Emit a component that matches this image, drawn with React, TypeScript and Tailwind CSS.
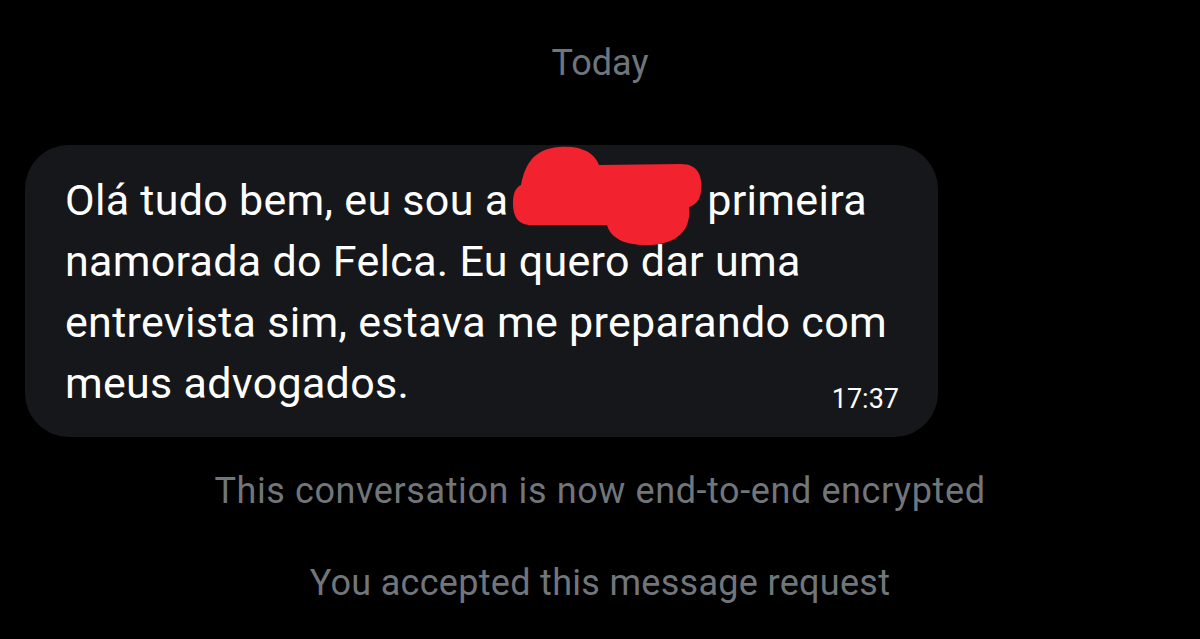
export default function App() {
  return (
    <div
      className="flex h-[639px] w-[1200px] flex-col overflow-hidden bg-black"
      style={{ fontFamily: "Roboto, 'Liberation Sans', sans-serif" }}
    >
      <div className="mt-[43px] text-center text-[36px] leading-[40px] text-[#6e767d]">Today</div>

      <div className="ml-[25px] mt-[62px] w-[913px] rounded-[44px] bg-[#16171a] pb-[23px] pl-[40px] pr-[39px] pt-[25px] text-[43px] leading-[61px] tracking-[0.3px] text-white">
        <div className="whitespace-nowrap">
          Olá tudo bem, eu sou a{" "}
          <span className="relative inline-block h-[10px] w-[177px]">
            <svg
              className="absolute left-[-8px] top-[-60px]"
              width="194"
              height="102"
              viewBox="0 0 194 102"
            >
              <path
                d="M10 40 C14 20 22 4 48 2 C70 0 84 8 88 20 L170 19 C186 19 192 30 190 46 C189 56 184 60 178 62 C180 80 172 98 140 100 C115 101 100 94 96 80 L20 80 C6 80 2 70 2 58 C2 46 6 42 10 40 Z"
                fill="#f2222f"
              />
            </svg>
          </span>{" "}
          primeira
        </div>
        <div className="whitespace-nowrap">namorada do Felca. Eu quero dar uma</div>
        <div className="whitespace-nowrap">entrevista sim, estava me preparando com</div>
        <div className="flex items-end justify-between">
          <span className="whitespace-nowrap">meus advogados.</span>
          <span className="text-[27px] leading-[30px] tracking-normal">17:37</span>
        </div>
      </div>

      <div className="mt-[32px] text-center text-[36px] leading-[44px] tracking-[0.6px] text-[#71767b]">
        This conversation is now end-to-end encrypted
      </div>
      <div className="mt-[48px] text-center text-[36px] leading-[44px] tracking-[0.3px] text-[#71767b]">
        You accepted this message request
      </div>
    </div>
  );
}
